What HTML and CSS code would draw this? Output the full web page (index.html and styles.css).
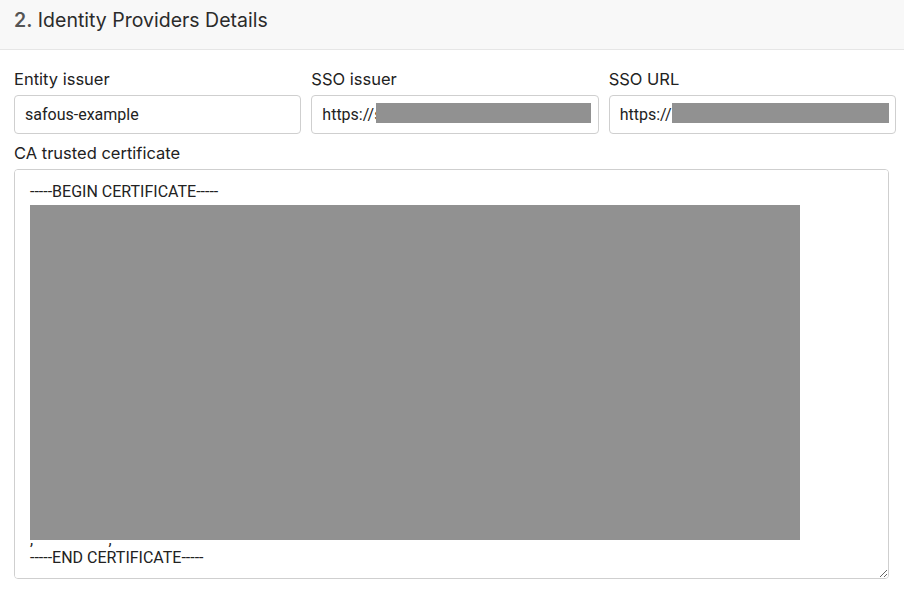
FILE: index.html
```html
<!DOCTYPE html>
<html lang="en">
<head>
    <meta charset="UTF-8">
    <meta name="viewport" content="width=device-width, initial-scale=1.0">
    <title>Identity Providers Details</title>
    <link rel="stylesheet" href="styles.css">
</head>
<body>
    <div class="section-head">
        <h2><span class="step">2.</span> Identity Providers Details</h2>
    </div>

    <div class="section-body">
        <div class="row">
            <div class="field">
                <label for="entityIssuer">Entity issuer</label>
                <input type="text" id="entityIssuer" value="safous-example">
            </div>
            <div class="field">
                <label for="ssoIssuer">SSO issuer</label>
                <div class="masked">
                    <input type="text" id="ssoIssuer" value="https://s">
                    <span class="redact redact-issuer"></span>
                </div>
            </div>
            <div class="field">
                <label for="ssoUrl">SSO URL</label>
                <div class="masked">
                    <input type="text" id="ssoUrl" value="https://">
                    <span class="redact redact-url"></span>
                </div>
            </div>
        </div>

        <div class="field">
            <label for="caCert">CA trusted certificate</label>
            <div class="masked cert-wrap">
                <textarea id="caCert" rows="21" spellcheck="false">-----BEGIN CERTIFICATE-----








.









,                   ,
-----END CERTIFICATE-----</textarea>
                <span class="redact redact-cert"></span>
            </div>
        </div>
    </div>
</body>
</html>
```

FILE: styles.css
```css
body {
    margin: 0;
    font-family: Inter, "Open Sans", sans-serif;
    color: #222;
    background-color: #fff;
}
.section-head {
    background-color: #f8f8f8;
    border-bottom: 1px solid #e6e6e6;
    padding: 8px 14px 0;
    height: 41px;
}
.section-head h2 {
    margin: 0;
    font-size: 19.5px;
    font-weight: 400;
    color: #2b2b2b;
}
.step {
    color: #555;
    font-weight: 600;
}
.section-body {
    padding: 19px 8px 0 14px;
}
.row {
    display: grid;
    grid-template-columns: repeat(3, 1fr);
    column-gap: 10px;
}
.field {
    display: flex;
    flex-direction: column;
}
label {
    font-size: 16.5px;
    margin-bottom: 6px;
    color: #222;
}
input, textarea {
    font-family: Roboto, sans-serif;
    font-size: 16px;
    color: #222;
    border: 1px solid #cfcfcf;
    border-radius: 4px;
    outline: none;
    box-sizing: border-box;
}
input {
    width: 100%;
    height: 39px;
    padding: 0 10px;
    margin-bottom: 9px;
}
.masked {
    position: relative;
}
.redact {
    position: absolute;
    background-color: #919191;
}
.redact-issuer {
    left: 65px;
    top: 8px;
    width: 215px;
    height: 20px;
}
.redact-url {
    left: 63px;
    top: 8px;
    width: 217px;
    height: 20px;
}
.cert-wrap {
    width: 875px;
}
textarea {
    display: block;
    width: 875px;
    height: 410px;
    padding: 13px 15px 12px;
    line-height: 18.3px;
    resize: vertical;
}
.redact-cert {
    left: 16px;
    top: 36px;
    width: 770px;
    height: 335px;
}
```
